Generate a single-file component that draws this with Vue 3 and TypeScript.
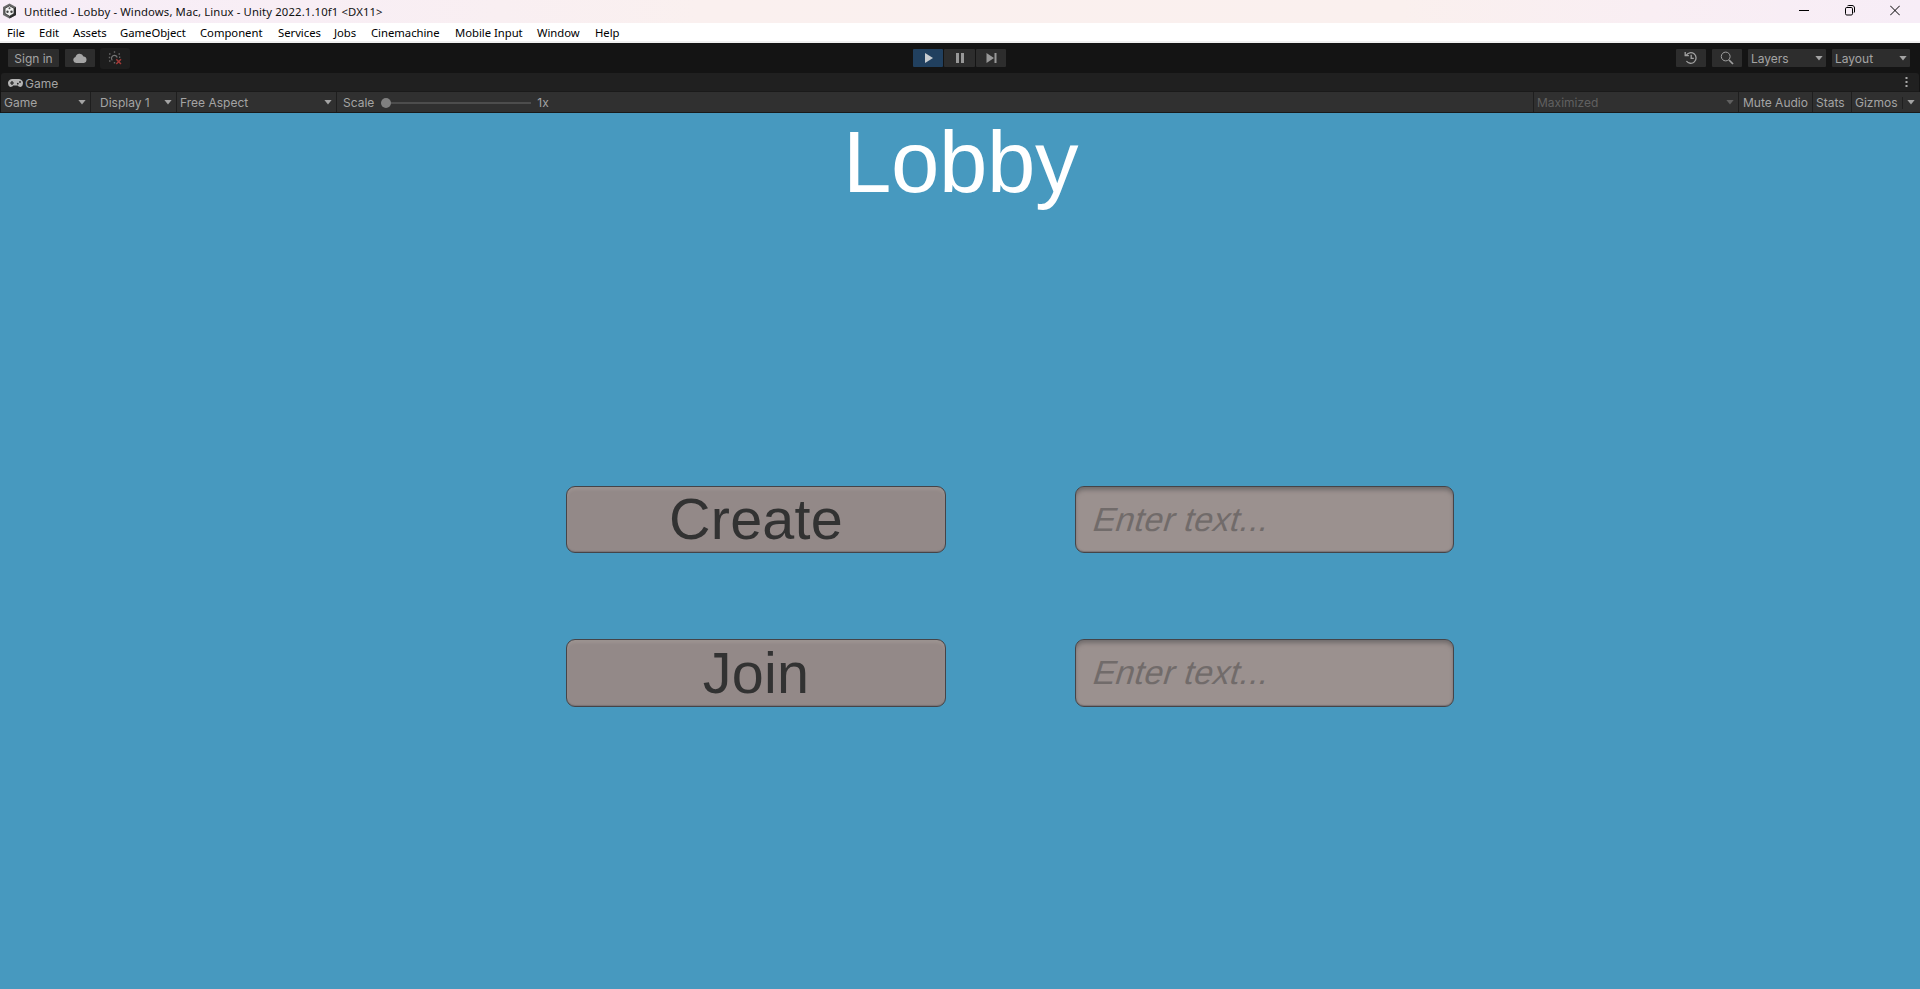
<script setup lang="ts">
interface MenuEntry {
  label: string
  width: number
}

const menu: MenuEntry[] = [
  { label: 'File', width: 18 },
  { label: 'Edit', width: 20 },
  { label: 'Assets', width: 33 },
  { label: 'GameObject', width: 66 },
  { label: 'Component', width: 64 },
  { label: 'Services', width: 42 },
  { label: 'Jobs', width: 23 },
  { label: 'Cinemachine', width: 70 },
  { label: 'Mobile Input', width: 68 },
  { label: 'Window', width: 44 },
  { label: 'Help', width: 26 },
]

const actions: string[] = ['Create', 'Join']
</script>

<template>
  <div class="window">
    <header class="titlebar">
      <svg class="logo" width="15" height="16" viewBox="0 0 15 16">
        <path d="M7.500 .5 14 4v8l-6.500 3.500L1 12V4z" fill="#6a6a6a" />
        <path d="M14 4v8l-6.500 3.500V13L11.500 10V6z" fill="#2c2c2c" />
        <path d="M7.500 2.800 12 5.300v5.200l-4.500 2.700L3 10.500V5.300z" fill="#f0f0f0" stroke="#333" stroke-width=".8" />
        <circle cx="5.500" cy="8.800" r="1.200" fill="#444" />
        <circle cx="9.500" cy="8.800" r="1.200" fill="#444" />
        <circle cx="7.500" cy="5.300" r="1" fill="#555" />
      </svg>
      <span class="caption">Untitled - Lobby - Windows, Mac, Linux - Unity 2022.1.10f1 &lt;DX11&gt;</span>
      <div class="controls">
        <svg width="10" height="11" viewBox="0 0 10 11"><path d="M0 5.500h10" stroke="#000" /></svg>
        <svg width="10" height="11" viewBox="0 0 10 11" fill="none" stroke="#000">
          <rect x=".5" y="2.500" width="7" height="7.500" rx="1.300" />
          <path d="M2.500 .9C3 .5 3.500 .5 4 .5h3c1.500 0 2.500 1 2.500 2.500V6c0 .8 0 1.300-.5 1.700" />
        </svg>
        <svg width="10" height="11" viewBox="0 0 10 11"><path d="M.2 .7l9.600 9.600M9.800 .7.2 10.300" stroke="#000" /></svg>
      </div>
    </header>

    <nav class="menubar">
      <span v-for="m in menu" :key="m.label" class="menu-item" :style="{ width: m.width + 'px' }">{{ m.label }}</span>
    </nav>

    <div class="toolbar">
      <div class="group">
        <button class="tool sign">Sign in</button>
        <button class="tool icon">
          <svg width="14" height="10" viewBox="0 0 14 10"><path d="M3.200 10a3 3 0 0 1-.7-5.900A4.200 4.200 0 0 1 10.500 3.500 3.300 3.300 0 0 1 11 10z" fill="#a5a5a5" /></svg>
        </button>
        <button class="tool status">
          <svg width="14" height="14" viewBox="0 0 14 14" fill="none">
            <path d="M4.300 9.300A2.900 2.900 0 1 1 9.200 6.500" stroke="#777" stroke-width="1.100" />
            <path d="M6.500 .2v1.600M6.500 11v1.600M1 3h1.500M.8 6.500h1.400M1 10h1.500M10.500 3H12M11 6.300h1.300" stroke="#666" stroke-width="1.400" />
            <path d="m8.300 8.300 4.700 4.700m0-4.700-4.700 4.700" stroke="#a33a38" stroke-width="1.500" />
          </svg>
        </button>
      </div>
      <div class="playback">
        <button class="tool play active"><svg width="10" height="10" viewBox="0 0 10 10"><path d="M1 0 9 5 1 10z" fill="#c8ccd0" /></svg></button>
        <button class="tool play"><svg width="10" height="10" viewBox="0 0 10 10"><path d="M1 0h3v10H1zM6 0h3v10H6z" fill="#989898" /></svg></button>
        <button class="tool play"><svg width="11" height="10" viewBox="0 0 11 10"><path d="M.5 0 8 5 .5 10zM8.500 0h2v10h-2z" fill="#989898" /></svg></button>
      </div>
      <div class="group right">
        <button class="tool icon">
          <svg width="14" height="14" viewBox="0 0 14 14" fill="none" stroke="#a0a0a0" stroke-width="1.300">
            <path d="M2.200 4.300A5.300 5.300 0 1 1 2.400 10M1.200 1v3.600h3.700M7.200 3.700v3.600h2.600" />
          </svg>
        </button>
        <button class="tool icon">
          <svg width="14" height="14" viewBox="0 0 14 14" fill="none" stroke="#a0a0a0">
            <circle cx="5.700" cy="5.500" r="4.400" /><path d="m9 9 4 4" stroke-width="1.700" />
          </svg>
        </button>
        <button class="tool drop">Layers<i class="arrow"></i></button>
        <button class="tool drop">Layout<i class="arrow"></i></button>
      </div>
    </div>

    <div class="tabs">
      <svg width="15" height="9" viewBox="0 0 15 9">
        <path d="M4 0h7a4 4 0 0 1 3.800 5.200C14.400 8 11.500 9 9.800 6.500H5.200C3.500 9 .6 8 .2 5.200A4 4 0 0 1 4 0z" fill="#b4b4b4" />
        <path d="M4 2v4M2 4h4" stroke="#202020" stroke-width="1.200" />
        <circle cx="9.800" cy="4.700" r=".9" fill="#202020" /><circle cx="12" cy="3" r=".9" fill="#202020" />
      </svg>
      <span>Game</span>
      <svg class="more" width="3" height="10" viewBox="0 0 3 10"><path d="M.5 0h2v2h-2zM.5 4h2v2h-2zM.5 8h2v2h-2z" fill="#a8a8a8" /></svg>
    </div>

    <div class="options">
      <div class="opt mode">Game<i class="arrow"></i></div>
      <div class="opt display">Display 1<i class="arrow"></i></div>
      <div class="opt aspect">Free Aspect<i class="arrow"></i></div>
      <div class="opt scale">Scale<div class="slider"><b></b></div>1x</div>
      <div class="opt maximized">Maximized<i class="arrow"></i></div>
      <div class="opt mute">Mute Audio</div>
      <div class="opt stats">Stats</div>
      <div class="opt gizmos">Gizmos<i class="bar"></i><i class="arrow"></i></div>
    </div>

    <main class="game">
      <h1>Lobby</h1>
      <div class="form">
        <template v-for="a in actions" :key="a">
          <button class="action">{{ a }}</button>
          <div class="field"><span>Enter text...</span></div>
        </template>
      </div>
    </main>
  </div>
</template>

<style>
body { margin: 0; overflow: hidden; }
</style>

<style scoped>
.window { width: 1920px; height: 989px; display: flex; flex-direction: column; overflow: hidden; background: #141414; font-family: Inter, sans-serif; font-size: 12px; color: #a4a4a4; }
.window * { box-sizing: border-box; white-space: nowrap; }
button { font: inherit; color: inherit; border: 0; padding: 0; }
svg { display: block; flex: none; }
.titlebar { height: 23px; flex: none; display: flex; align-items: center; padding: 0 20px 0 2px; background: linear-gradient(90deg, #f7edf7 0, #f8eef5 300px, #faf0ef 700px, #faf0ee 1400px, #f9eef3 1650px, #f7edf7 100%); color: #111; font-family: "Noto Sans", sans-serif; font-size: 11.300px; }
.logo { margin-right: 7px; margin-top: -1px; }
.caption { letter-spacing: 0.130px; }
.controls { margin-left: auto; display: flex; gap: 35.500px; padding-bottom: 3px; }
.menubar { height: 20px; flex: none; display: flex; gap: 14px; padding: 0 7px; background: #fff; border-bottom: 2px solid #f0f0f0; color: #000; font-family: "Noto Sans", sans-serif; font-size: 11.300px; line-height: 19px; }
.menu-item { flex: none; letter-spacing: -0.030px; }
.toolbar { height: 30px; flex: none; display: grid; grid-template-columns: 1fr 94px 1fr; align-items: center; padding: 0 10px 0 8px; }
.group { display: flex; align-items: center; gap: 6px; }
.right { justify-content: flex-end; }
.tool { height: 18px; display: flex; align-items: center; justify-content: center; background: #2d2d2d; border-radius: 1px; }
.sign { width: 51px; }
.icon { width: 30px; }
.status { width: 30px; height: 21px; margin-left: -1px; background: #1d1d1d; border-radius: 3px; }
.playback { display: flex; gap: 1px; margin-left: 1px; }
.play { width: 31px; }
.play svg { margin-left: 1px; }
.play.active { background: #21405f; }
.drop { width: 78px; padding: 0 3px; justify-content: space-between; }
.arrow { width: 8px; height: 5px; flex: none; background: currentColor; clip-path: polygon(0 0, 100% 0, 50% 100%); }
.tabs { height: 19px; flex: none; margin: 0 1px; padding: 2px 14px 0 7px; display: flex; align-items: center; gap: 2px; background: #202020; border-radius: 3px 3px 0 0; border-bottom: 1px solid #1a1a1a; }
.more { margin-left: auto; margin-right: -3px; margin-top: -3px; }
.options { height: 21px; flex: none; margin: 0 0 0 1px; display: flex; background: #303030; border-bottom: 1px solid #191919; }
.opt { display: flex; align-items: center; justify-content: space-between; border-right: 1px solid #1e1e1e; padding: 1px 4px 0; }
.opt .arrow { margin-top: -1px; }
.mode { width: 90px; padding-left: 3px; }
.display { width: 86px; padding-left: 9px; }
.aspect { width: 160px; padding-left: 3px; }
.scale { flex: 1; justify-content: flex-start; padding-left: 6px; }
.slider { width: 150px; height: 2px; margin: 0 6px 0 7px; background: #4d4d4d; display: flex; align-items: center; }
.slider b { width: 10px; height: 10px; border-radius: 50%; background: #808080; }
.maximized { width: 205px; color: #606060; padding-left: 3px; }
.mute { width: 74px; }
.stats { width: 39px; padding-left: 3px; padding-right: 3px; }
.gizmos { width: 68px; border: 0; padding-right: 5px; padding-left: 3px; }
.bar { width: 1px; height: 12px; background: #202020; }
.game { flex: 1; display: flex; flex-direction: column; background: #4799bf; font-family: "Liberation Sans", Arial, sans-serif; }
h1 { margin: 0; height: 373px; padding: 0 0 0 1px; text-align: center; color: #fff; font-size: 87px; font-weight: 400; line-height: 97px; letter-spacing: -.4px; }
.form { display: grid; grid-template-columns: 380px 379px; grid-template-rows: 67px 68px; gap: 86px 129px; margin-left: 566px; }
.action, .field { border: 1px solid #454448; border-radius: 9px; }
.action { background: #938988; color: #323232; font-size: 57.500px; line-height: 65px; letter-spacing: .2px; box-shadow: inset 0 3px 3px #9c9390, inset 0 -1px 1px #7b7476; }
.field { background: #9b918f; color: #716b6a; display: flex; align-items: center; padding-left: 18px; font-size: 33.500px; letter-spacing: .35px; box-shadow: inset 0 4px 4px -1px #716c6c, inset 0 -1px 1px #7b7476; }
.field span { transform: skewX(-17deg); }
</style>
